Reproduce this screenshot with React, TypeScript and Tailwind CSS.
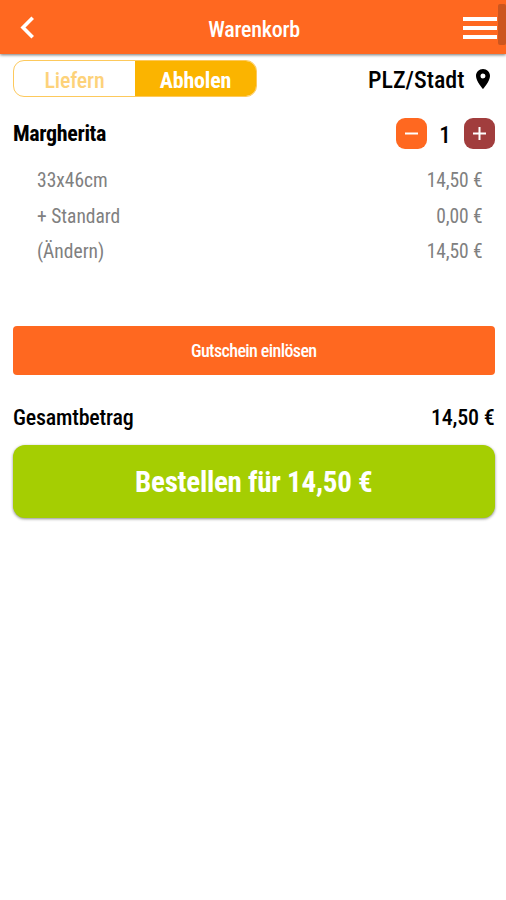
import type { ReactNode } from 'react'

interface CartLine {
  label: string
  price: string
}

const lines: CartLine[] = [
  { label: '33x46cm', price: '14,50 €' },
  { label: '+ Standard', price: '0,00 €' },
  { label: '(Ändern)', price: '14,50 €' },
]

function Header() {
  return (
    <header className="relative flex h-[54px] items-center bg-[#ff6820] pl-5 pr-[9px] shadow-[0_1px_3px_rgba(0,0,0,0.55)]">
      <button aria-label="Zurück" className="w-[34px]">
        <svg width="16" height="24" viewBox="0 0 16 24" fill="none" stroke="white" strokeWidth="3.6">
          <path d="M12.700 2.800 3 12.500l9.700 9.700" />
        </svg>
      </button>
      <h1 className="flex-1 pr-[9px] pt-[6px] text-center text-[22px] font-medium tracking-[-0.25px] text-white">
        Warenkorb
      </h1>
      <button aria-label="Menü" className="flex w-[34px] flex-col gap-[5px] pt-[2px]">
        <span className="h-1 bg-white" />
        <span className="h-1 bg-white" />
        <span className="h-1 bg-white" />
      </button>
      {/* scrollbar thumb */}
      <div className="absolute right-0 top-1 h-[41px] w-2 rounded-xs bg-[#cc561f]" />
    </header>
  )
}

function StepButton({ label, className, children }: { label: string; className: string; children: ReactNode }) {
  return (
    <button aria-label={label} className={`flex size-[31px] items-center justify-center rounded-[9px] ${className}`}>
      <svg width="15" height="15" viewBox="0 0 15 15" stroke="white" strokeWidth="2">
        {children}
      </svg>
    </button>
  )
}

export default function App() {
  return (
    <div className="min-h-[900px] w-full overflow-hidden bg-white font-['Roboto_Condensed','Roboto',sans-serif] leading-none text-black [font-stretch:75%]">
      <Header />

      <main className="pl-[13px] pr-[11.500px] pt-[6px]">
        <div className="flex h-[37px] items-center justify-between">
          <div className="flex h-full w-[244px] overflow-hidden rounded-[11px] border border-[#fdc95c] text-[22px]">
            <button className="w-[121px] pt-[5px] font-medium tracking-[-0.2px] text-[#fdd27a]">Liefern</button>
            <button className="flex-1 bg-[#fbb400] pt-[5px] font-bold tracking-[-0.2px] text-white">Abholen</button>
          </div>
          <div className="flex items-center gap-[11px] pr-[5px] pt-px">
            <span className="pt-[2px] text-[24px] font-medium">PLZ/Stadt</span>
            <svg width="14" height="20" viewBox="5 2 14 20" preserveAspectRatio="none">
              <path d="M12 2C8.130 2 5 5.130 5 9c0 5.250 7 13 7 13s7-7.750 7-13c0-3.870-3.130-7-7-7zm0 9.500a2.500 2.500 0 1 1 0-5 2.500 2.500 0 0 1 0 5z" />
            </svg>
          </div>
        </div>

        <div className="mt-[21px] flex h-[31px] items-center justify-between">
          <h2 className="text-[22px] font-bold tracking-[-0.35px]">Margherita</h2>
          <div className="flex items-center">
            <StepButton label="Weniger" className="bg-[#ff6820]">
              <path d="M1 7.500h13" />
            </StepButton>
            <span className="w-[37px] pt-[3px] text-center text-[23px] font-medium">1</span>
            <StepButton label="Mehr" className="bg-[#a13d3d]">
              <path d="M1 7.500h13M7.500 1v13" />
            </StepButton>
          </div>
        </div>

        <ul className="mt-[13px] pl-6 pr-3 pt-px text-[19.500px] text-[#808080]">
          {lines.map((line) => (
            <li key={line.label} className="flex h-[35.500px] items-center justify-between">
              <span>{line.label}</span>
              <span className="tracking-[-0.1px]">{line.price}</span>
            </li>
          ))}
        </ul>

        <button className="mt-[56px] h-[49px] w-full rounded bg-[#ff6820] pt-[2px] text-[18px] font-medium tracking-[-0.6px] text-white">
          Gutschein einlösen
        </button>

        <div className="flex h-[70px] items-center justify-between pt-[16px] text-[22px] font-medium tracking-[-0.2px]">
          <span>Gesamtbetrag</span>
          <span>14,50 €</span>
        </div>

        <button className="h-[73px] w-full rounded-xl bg-[#a5ce02] pt-[3px] text-[29px] font-bold tracking-[-0.25px] text-white shadow-[0_1px_3px_rgba(0,0,0,0.45)]">
          Bestellen für 14,50 €
        </button>
      </main>
    </div>
  )
}
